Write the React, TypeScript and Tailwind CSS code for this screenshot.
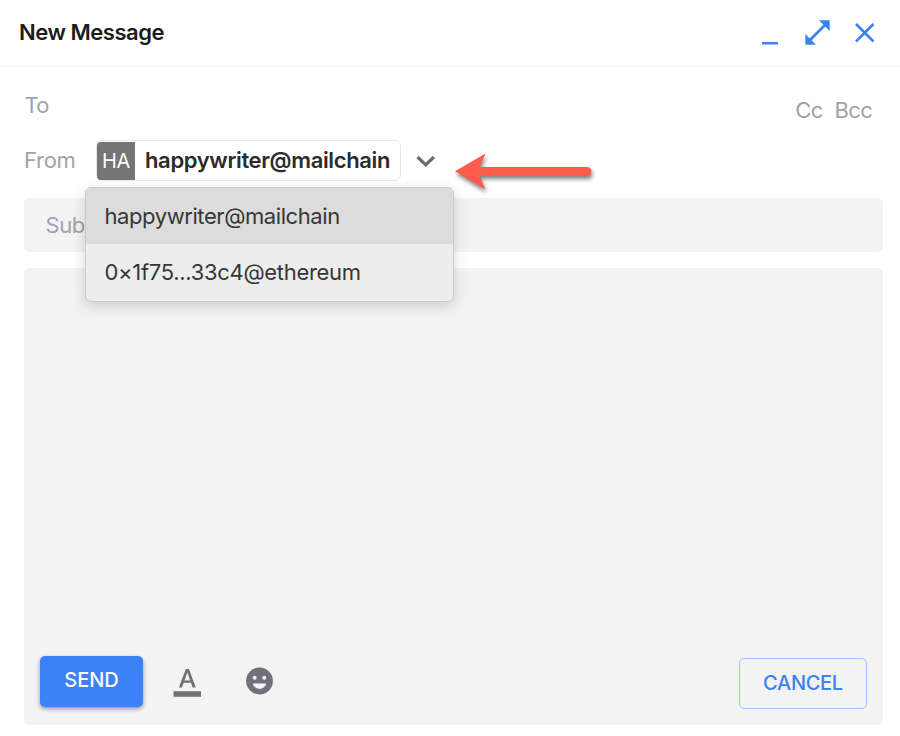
import React from "react";

const options = ["happywriter@mailchain", "0×1f75...33c4@ethereum"];

function Header() {
  return (
    <header className="flex h-[67px] items-start justify-between border-b border-[#f1f1f3] pl-[19px]">
      <h1 className="mt-[16px] text-[22px] leading-[32px] font-semibold tracking-[-0.47px] text-[#1c1c1c]">New Message</h1>
      <svg className="h-[66px] w-[160px]" viewBox="0 0 160 66" fill="none" stroke="#3b82f6">
        <path d="M22 43.2H38" strokeWidth="2.6" />
        <path d="M69 41L86 24" strokeWidth="2.8" />
        <path d="M79 20.3H89.7V31ZM65.3 34V44.7H76Z" fill="#3b82f6" stroke="none" />
        <path d="M116 24L133.5 41.5M133.5 24L116 41.5" strokeWidth="2.6" />
      </svg>
    </header>
  );
}

function SenderMenu() {
  return (
    <ul className="absolute top-[47px] left-[-11px] z-10 h-[115px] w-[369px] overflow-hidden rounded-[6px] border border-[#cbcbcb] bg-[#ededed] text-[22px] text-[#363636] shadow-[0_4px_14px_rgba(0,0,0,0.16)]">
      {options.map((option, i) => (
        <li
          key={option}
          className={
            i === 0
              ? "flex h-[56px] items-center bg-[#dcdcdc] pl-[18.5px] tracking-[-0.42px]"
              : "flex h-[57px] items-center pl-[18.5px] tracking-[-0.31px]"
          }
        >
          {option}
        </li>
      ))}
    </ul>
  );
}

function Arrow() {
  return (
    <svg
      className="absolute top-[9px] left-[354px] h-[50px] w-[150px] drop-shadow-[1px_3px_2px_rgba(0,0,0,0.5)]"
      viewBox="450 149 150 50"
    >
      <path d="M455 171.3L485.5 153.5L479.5 167H587A4.5 4.5 0 0 1 587 176H479.5L485.5 189.5Z" fill="#ff5b4d" />
    </svg>
  );
}

export default function App() {
  return (
    <main className="flex h-[736px] w-[900px] flex-col overflow-hidden bg-white font-['Inter',sans-serif]">
      <Header />
      <div className="flex h-[73px] justify-between pr-[28px] pl-[24.5px] text-[22px] leading-[32px] tracking-[-0.7px] text-[#a1a1aa]">
        <span className="mt-[22px]">To</span>
        <span className="mt-[27px] flex gap-[12px]">
          <span>Cc</span>
          <span>Bcc</span>
        </span>
      </div>
      <div className="flex h-[58px] items-start pl-[24px]">
        <span className="mt-[4px] w-[72px] text-[22px] leading-[32px] tracking-[-0.3px] text-[#a1a1aa]">From</span>
        <div className="relative flex items-start">
          <div className="flex h-[41px] w-[305px] items-center rounded-[6px] border border-[#e8e8e8]">
            <span className="flex h-[38px] w-[38px] items-center justify-center rounded-l-[4px] bg-[#757575] text-[20px] tracking-[-0.3px] text-white">
              HA
            </span>
            <span className="ml-[10px] text-[22px] font-semibold tracking-[-0.36px] text-[#2b2b2b]">happywriter@mailchain</span>
          </div>
          <svg className="mt-[13px] ml-[14.5px] h-[16px] w-[20px]" viewBox="0 0 20 16" fill="none">
            <path d="M1.5 4L9.7 11.8L17.9 4" stroke="#6b6b6f" strokeWidth="3.2" />
          </svg>
          <SenderMenu />
          <Arrow />
        </div>
      </div>
      <div className="ml-[24px] flex h-[54px] w-[859px] items-center rounded-[5px] bg-[#f3f3f3] pl-[21.5px] text-[22px] tracking-[-0.4px] text-[#9ca3af]">
        Subject
      </div>
      <section className="mt-[16px] ml-[24px] flex h-[457px] w-[859px] items-end rounded-[5px] bg-[#f3f3f3] px-[16px] pb-[16px]">
        <button className="mb-[2px] flex h-[51px] w-[103px] items-center justify-center rounded-[5px] bg-[#3b82f6] pb-[3px] text-[20px] font-medium text-white shadow-[0_2px_4px_rgba(0,0,0,0.4)]">
          SEND
        </button>
        <svg className="mb-[12px] ml-[30px] h-[30px] w-[29px]" viewBox="0 0 29 30" fill="#717171">
          <path d="M0.5 24.2H28V29.8H0.5Z" />
          <path
            fillRule="evenodd"
            d="M12.8 2H15.9L22.8 20.5H19.7L18 15.8H10.7L9 20.5H5.9ZM14.35 5.3L11.5 13.4H17.2Z"
          />
        </svg>
        <svg className="mb-[13px] ml-[43px] h-[29px] w-[29px]" viewBox="0 0 29 29">
          <circle cx="14.5" cy="14" r="13.4" fill="#71717a" />
          <circle cx="9.7" cy="10.7" r="2" fill="#f3f3f3" />
          <circle cx="19.3" cy="10.7" r="2" fill="#f3f3f3" />
          <path d="M7.7 16.5H21.3C20.3 19.8 17.7 21.9 14.5 21.9S8.7 19.8 7.7 16.5Z" fill="#f3f3f3" />
        </svg>
        <button className="ml-auto flex h-[51px] w-[128px] items-center justify-center rounded-[5px] border border-[#9fc2fb] pb-[1px] text-[20px] font-medium tracking-[-0.3px] text-[#3b82f6]">
          CANCEL
        </button>
      </section>
    </main>
  );
}
